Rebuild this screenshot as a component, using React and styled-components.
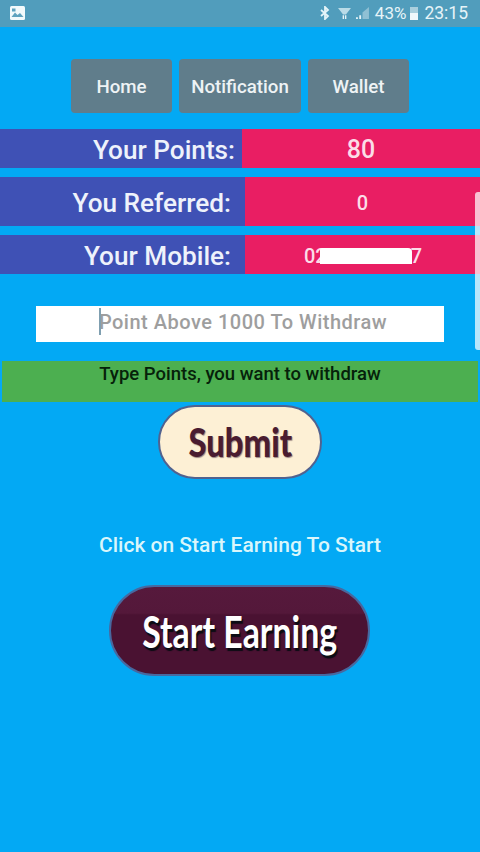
import React from "react";
import styled, { createGlobalStyle } from "styled-components";

const GlobalStyle = createGlobalStyle`
  html, body {
    margin: 0;
    padding: 0;
    background: #03a9f4;
  }
  * {
    box-sizing: border-box;
  }
`;

function App() {
  return (
    <Page>
      <GlobalStyle />
      <StatusBar>
        <svg width="15" height="14" viewBox="0 0 15 14">
          <rect width="15" height="14" rx="1.5" fill="#f2fafc" />
          <path d="M1.5 11 L5 6.5 L7.5 9 L10 7 L13.5 11 Z" fill="#5fa3bf" />
          <rect x="2" y="2.5" width="3.5" height="3" fill="#5fa3bf" />
        </svg>
        <StatusRight>
          <svg width="10" height="14" viewBox="0 0 10 14">
            <path d="M1 4 L8 10 L5 13 V1 L8 4 L1 10" fill="none" stroke="#e6f4f8" strokeWidth="1.8" />
          </svg>
          <WifiIcon width="13" height="13" viewBox="0 0 14 14">
            <path d="M0 1 H14 L8.5 8 H5.5 Z" fill="#b9dbe7" />
            <path d="M5 13 V9 H6.5 V13 Z M7.5 13 V9 H9 V13 Z" fill="#e6f4f8" />
          </WifiIcon>
          <svg width="13" height="12" viewBox="0 0 14 13">
            <path d="M0 13 V11 H2 V13 Z M3.5 13 V9 H5.5 V13 Z" fill="#e6f4f8" />
            <path d="M7 13 V6 L14 0 V13 Z" fill="#8fc0d4" />
          </svg>
          <BatteryText>43%</BatteryText>
          <Battery />
          <Clock>23:15</Clock>
        </StatusRight>
      </StatusBar>

      <Nav>
        <NavButton $width={101}>Home</NavButton>
        <NavButton $width={122}>Notification</NavButton>
        <NavButton $width={101}>Wallet</NavButton>
      </Nav>

      <Stats>
        <StatRow $height={39} $labelWidth={242}>
          <StatLabel $pad={7}>Your Points:</StatLabel>
          <StatValue $size={25}>80</StatValue>
        </StatRow>
        <StatRow $height={49} $labelWidth={245}>
          <StatLabel $pad={14}>You Referred:</StatLabel>
          <StatValue $size={20}>0</StatValue>
        </StatRow>
        <StatRow $height={39} $labelWidth={245}>
          <StatLabel $pad={14}>Your Mobile:</StatLabel>
          <StatValue $size={20}>
            <MobileNumber>
              02<Redacted />7
            </MobileNumber>
          </StatValue>
        </StatRow>
      </Stats>

      <InputBox>
        <Caret />
        <Placeholder>Point Above 1000 To Withdraw</Placeholder>
      </InputBox>

      <Hint>Type Points, you want to withdraw</Hint>

      <SubmitButton>
        <SubmitLabel>Submit</SubmitLabel>
      </SubmitButton>

      <StartText>Click on Start Earning To Start</StartText>

      <EarnButton>
        <EarnLabel>Start Earning</EarnLabel>
      </EarnButton>

      <Scrollbar />
    </Page>
  );
}

const Page = styled.div`
  position: relative;
  width: 480px;
  height: 852px;
  overflow: hidden;
  background: #03a9f4;
  font-family: Roboto, "Liberation Sans", sans-serif;
  display: flex;
  flex-direction: column;
  align-items: center;
`;

const StatusBar = styled.div`
  width: 100%;
  height: 27px;
  flex: none;
  background: #519dbc;
  padding: 0 12px 1px 10px;
  display: flex;
  align-items: center;
  justify-content: space-between;
`;

const StatusRight = styled.div`
  display: flex;
  align-items: center;
  gap: 5px;
  color: #e6f4f8;
`;

const WifiIcon = styled.svg`
  margin-left: 3px;
`;

const BatteryText = styled.span`
  font-size: 17px;
  margin-left: 1px;
`;

const Battery = styled.span`
  width: 8px;
  height: 13px;
  background: linear-gradient(#a9cfdd 45%, #f0f8fb 45%);
  margin-left: -1px;
`;

const Clock = styled.span`
  font-size: 17.5px;
  margin-left: 1px;
`;

const Nav = styled.div`
  display: flex;
  gap: 7px;
  margin-top: 32px;
`;

const NavButton = styled.div`
  width: ${(p) => p.$width}px;
  height: 54px;
  padding-top: 2px;
  border-radius: 4px;
  background: #607d8b;
  color: #eef3f5;
  font-size: 18.7px;
  font-weight: 500;
  display: flex;
  align-items: center;
  justify-content: center;
`;

const Stats = styled.div`
  width: 100%;
  margin-top: 16px;
  display: flex;
  flex-direction: column;
  gap: 9px;
`;

const StatRow = styled.div`
  height: ${(p) => p.$height}px;
  display: grid;
  grid-template-columns: ${(p) => p.$labelWidth}px 1fr;
`;

const StatLabel = styled.div`
  background: #3f51b5;
  color: #eef2fb;
  font-size: 26.2px;
  font-weight: 500;
  padding-top: 2px;
  padding-right: ${(p) => p.$pad}px;
  display: flex;
  align-items: center;
  justify-content: flex-end;
`;

const StatValue = styled.div`
  background: #e91e63;
  color: #fbdde8;
  font-size: ${(p) => p.$size}px;
  font-weight: 500;
  padding-top: 2px;
  display: flex;
  align-items: center;
  justify-content: center;
`;

const MobileNumber = styled.span`
  display: inline-flex;
  align-items: center;
  margin-left: 1px;
`;

const Redacted = styled.span`
  width: 92px;
  height: 16px;
  background: #fff;
  margin-left: -7px;
  margin-right: -1px;
  border-radius: 2px 4px 0 0;
`;

const InputBox = styled.div`
  position: relative;
  width: 408px;
  height: 36px;
  margin-top: 32px;
  background: #fff;
  padding-bottom: 5px;
  display: flex;
  align-items: center;
  justify-content: center;
`;

const Caret = styled.span`
  position: absolute;
  left: 63px;
  top: 2px;
  width: 2px;
  height: 27px;
  background: #7f9fb0;
`;

const Placeholder = styled.span`
  color: #9e9e9e;
  font-size: 20px;
  font-weight: 500;
  letter-spacing: 0.5px;
  margin-left: 6px;
`;

const Hint = styled.div`
  width: 476px;
  height: 41px;
  margin-top: 19px;
  padding-top: 1px;
  background: #4caf50;
  color: #06210a;
  font-size: 18.5px;
  font-weight: 500;
  text-align: center;
  line-height: 24px;
`;

const SubmitButton = styled.div`
  width: 164px;
  height: 74px;
  margin-top: 3px;
  border-radius: 37px;
  background: #fdf0d5;
  border: 2px solid #51628f;
  display: flex;
  align-items: center;
  justify-content: center;
`;

const SubmitLabel = styled.span`
  color: #4a1c30;
  font-family: Lato, sans-serif;
  font-size: 40px;
  font-weight: 900;
  transform: scaleX(0.82);
  text-shadow: 1px 1px 1px rgba(60, 30, 50, 0.5);
`;

const StartText = styled.div`
  margin-top: 54px;
  color: #d9f6fb;
  font-size: 21px;
  font-weight: 500;
  line-height: 24px;
`;

const EarnButton = styled.div`
  width: 261px;
  height: 91px;
  margin-top: 28px;
  margin-left: -1px;
  border-radius: 46px;
  background: linear-gradient(#56193c 0%, #54183a 30%, #4a1232 32%, #4a1232 100%);
  border: 2px solid #48689f;
  display: flex;
  align-items: center;
  justify-content: center;
`;

const EarnLabel = styled.span`
  color: #fff;
  font-family: Lato, sans-serif;
  font-size: 44px;
  font-weight: 700;
  white-space: nowrap;
  transform: scaleX(0.77);
  text-shadow: 2px 3px 1px #0c0c14;
`;

const Scrollbar = styled.div`
  position: absolute;
  right: 0;
  top: 192px;
  width: 5px;
  height: 158px;
  border-radius: 3px 0 0 3px;
  background: rgba(255, 255, 255, 0.72);
`;

export default App;
